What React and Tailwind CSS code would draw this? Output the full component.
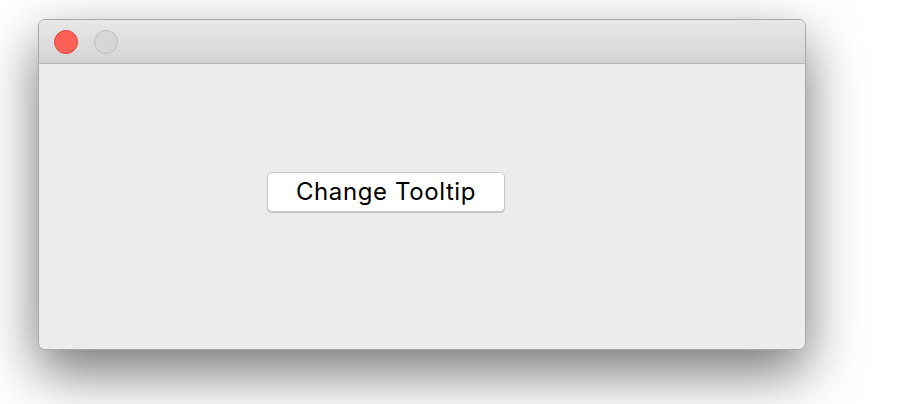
export default function App() {
  return (
    <div className="w-[902px] h-[404px] bg-white overflow-hidden pl-[38px] pt-[19px]" style={{ fontFamily: 'Inter, "Liberation Sans", Arial, sans-serif' }}>
      <div className="w-[768px] h-[331px] rounded-[7px] border border-[#a8a8a8] bg-[#ececec] flex flex-col overflow-hidden shadow-[0_22px_55px_rgba(0,0,0,0.55)]">
        <div className="h-[44px] shrink-0 bg-gradient-to-b from-[#e8e8e8] to-[#d3d3d3] border-b border-[#b4b4b4] flex items-center pl-[15px] gap-[16px]">
          <div className="w-[24px] h-[24px] rounded-full bg-[#fe5f57] border border-[#e0443e]" />
          <div className="w-[24px] h-[24px] rounded-full bg-[#d6d6d6] border border-[#bdbdbd]" />
        </div>
        <div className="flex-1 pl-[228px] pt-[108px]">
          <button className="w-[238px] h-[40px] rounded-[5px] bg-white border border-[#c8c8c8] shadow-[0_1px_1px_rgba(0,0,0,0.18)] text-[24px] tracking-[0.6px] text-black flex items-center justify-center leading-none">
            Change Tooltip
          </button>
        </div>
      </div>
    </div>
  );
}
